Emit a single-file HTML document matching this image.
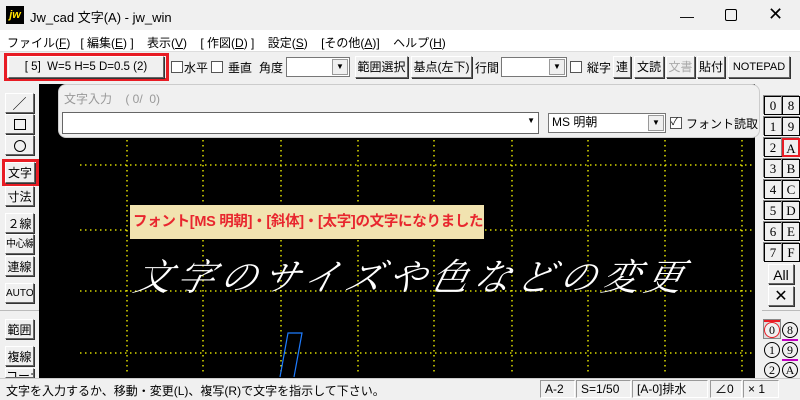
<!DOCTYPE html><html><head><meta charset="utf-8"><style>
*{margin:0;padding:0;box-sizing:border-box}
body{width:800px;height:400px;overflow:hidden;background:#f0f0f0;font-family:"Liberation Sans","Noto Sans CJK JP",sans-serif;font-size:12px;color:#000;position:relative}
.a{position:absolute}
.btn{position:absolute;background:#f0f0f0;border:1px solid;border-color:#fff #666 #666 #fff;box-shadow:1px 1px 0 #333;text-align:center;font-size:12px;line-height:20px;white-space:nowrap;overflow:hidden}
.cb{position:absolute;width:12px;height:12px;border:1px solid #555;background:#fff}
.sel{position:absolute;background:#fff;border:1px solid #777;height:20px}
.dd{position:absolute;right:1px;top:1px;width:16px;height:16px;background:#f0f0f0;border:1px solid #999;font-size:8px;line-height:14px;text-align:center}
.n{position:absolute;width:18px;height:19px;background:#f0f0f0;border:1px solid #000;font-family:"Liberation Serif",serif;font-size:13px;line-height:17px;text-align:center;box-shadow:-1px -1px 0 #888}
.st{position:absolute;top:380px;height:18px;border:1px solid;border-color:#999 #fff #fff #999;font-size:12px;line-height:16px;padding-left:4px}
.c{position:absolute;width:16px;height:16px;border:1px solid #000;border-radius:50%;font-family:"Liberation Serif",serif;font-size:12px;line-height:14px;text-align:center;background:#f0f0f0}
</style></head><body>
<div class="a" style="left:6px;top:6px;width:18px;height:18px;background:#000;color:#ffe000;font-weight:bold;font-style:italic;font-size:11px;line-height:18px;text-align:center">jw</div>
<div class="a" style="left:30px;top:7px;font-size:13px">Jw_cad 文字(A) - jw_win</div>
<div class="a" style="left:680px;top:8px;font-size:14px">—</div>
<div class="a" style="left:725px;top:9px;width:12px;height:12px;border:1.5px solid #000;border-radius:2px"></div>
<div class="a" style="left:768px;top:4px;font-size:18px">✕</div>
<div class="a" style="left:0;top:30px;width:800px;height:21px;background:#fff"></div>
<div class="a" style="left:7px;top:34px;font-size:12px;white-space:pre">ファイル(<u>F</u>)   [ 編集(<u>E</u>) ]    表示(<u>V</u>)    [ 作図(<u>D</u>) ]    設定(<u>S</u>)    [その他(<u>A</u>)]    ヘルプ(<u>H</u>)</div>
<div class="a" style="left:0;top:51px;width:800px;height:1px;background:#ddd"></div>
<div class="a" style="left:4px;top:53px;width:165px;height:28px;border:3px solid #e81c24"></div>
<div class="btn" style="left:8px;top:56px;width:156px;height:22px;font-size:11.5px">[ 5]&nbsp; W=5 H=5 D=0.5 (2)</div>
<div class="cb" style="left:171px;top:61px"></div><div class="a" style="left:184px;top:59px">水平</div>
<div class="cb" style="left:211px;top:61px"></div><div class="a" style="left:228px;top:59px">垂直</div>
<div class="a" style="left:259px;top:59px">角度</div>
<div class="sel" style="left:286px;top:57px;width:64px"><div class="dd">▼</div></div>
<div class="btn" style="left:355px;top:56px;width:53px">範囲選択</div>
<div class="btn" style="left:411px;top:56px;width:61px">基点(左下)</div>
<div class="a" style="left:475px;top:59px">行間</div>
<div class="sel" style="left:501px;top:57px;width:66px"><div class="dd">▼</div></div>
<div class="cb" style="left:570px;top:61px"></div><div class="a" style="left:587px;top:59px">縦字</div>
<div class="btn" style="left:613px;top:56px;width:18px">連</div>
<div class="btn" style="left:634px;top:56px;width:30px">文読</div>
<div class="btn" style="left:666px;top:56px;width:29px;color:#aaa">文書</div>
<div class="btn" style="left:697px;top:56px;width:28px">貼付</div>
<div class="btn" style="left:728px;top:56px;width:62px;font-size:11px">NOTEPAD</div>
<div class="a" style="left:39px;top:84px;width:716px;height:294px;background:#000"></div>
<svg class="a" style="left:0;top:0" width="800" height="400">
<g stroke="#ffff00" stroke-width="1.3" stroke-dasharray="1.5,3.5">
<line x1="80" y1="165" x2="755" y2="165"/><line x1="80" y1="230" x2="755" y2="230"/><line x1="80" y1="291" x2="755" y2="291"/><line x1="80" y1="353" x2="755" y2="353"/>
<line x1="127" y1="140" x2="127" y2="375"/><line x1="203" y1="140" x2="203" y2="375"/><line x1="281" y1="140" x2="281" y2="375"/><line x1="358" y1="140" x2="358" y2="375"/><line x1="434" y1="140" x2="434" y2="375"/><line x1="512" y1="140" x2="512" y2="375"/><line x1="588" y1="140" x2="588" y2="375"/><line x1="665" y1="140" x2="665" y2="375"/><line x1="742" y1="140" x2="742" y2="375"/>
</g>
<polyline points="280,377 288,333 302,333 294,377" fill="none" stroke="#1e7cff" stroke-width="1.2"/>
</svg>
<div class="a" style="left:130px;top:205px;width:354px;height:34px;background:#f1e3b0"></div>
<div class="a" style="left:133px;top:210px;color:#e8262e;font-weight:bold;font-size:14.5px;letter-spacing:-0.3px;white-space:nowrap">フォント[MS 明朝]・[斜体]・[太字]の文字になりました</div>
<div class="a" style="left:136px;top:247px;color:#fff;font-family:'Liberation Serif','Noto Serif CJK SC',serif;font-style:italic;font-size:37px;letter-spacing:5.8px;white-space:nowrap;transform:skewX(-14deg)">文字のサイズや色などの変更</div>
<div class="a" style="left:58px;top:84px;width:702px;height:54px;background:#f0f0f0;border-radius:8px;border:1px solid #ccc"></div>
<div class="a" style="left:64px;top:90px;color:#999;font-size:12px;white-space:pre">文字入力    ( 0/  0)</div>
<div class="sel" style="left:62px;top:112px;width:477px;height:22px;border-color:#666"><div class="a" style="right:3px;top:3px;font-size:8px">▼</div></div>
<div class="sel" style="left:548px;top:113px;width:118px;padding-left:3px;line-height:16px">MS 明朝<div class="dd">▼</div></div>
<div class="cb" style="left:670px;top:117px;font-size:10px;line-height:10px">✓</div>
<div class="a" style="left:686px;top:115px;font-size:12px">フォント読取</div>
<div class="btn" style="left:5px;top:93px;width:29px;height:20px;font-size:14px">／</div>
<div class="btn" style="left:5px;top:114px;width:29px;height:20px"><div class="a" style="left:8px;top:4px;width:12px;height:11px;border:1px solid #000"></div></div>
<div class="btn" style="left:5px;top:135px;width:29px;height:20px"><div class="a" style="left:8px;top:4px;width:12px;height:12px;border:1px solid #000;border-radius:50%"></div></div>
<div class="a" style="left:2px;top:159px;width:37px;height:27px;border:3px solid #e81c24"></div>
<div class="btn" style="left:5px;top:162px;width:30px;height:21px">文字</div>
<div class="btn" style="left:5px;top:186px;width:29px;height:20px">寸法</div>
<div class="btn" style="left:5px;top:213px;width:29px;height:20px">２線</div>
<div class="btn" style="left:5px;top:234px;width:29px;height:20px;font-size:10px;letter-spacing:-0.5px">中心線</div>
<div class="btn" style="left:5px;top:256px;width:29px;height:20px">連線</div>
<div class="btn" style="left:5px;top:283px;width:29px;height:20px;font-size:10px">AUTO</div>
<div class="a" style="left:0;top:310px;width:39px;height:1px;background:#bbb"></div>
<div class="btn" style="left:5px;top:319px;width:29px;height:20px">範囲</div>
<div class="btn" style="left:5px;top:346px;width:29px;height:20px">複線</div>
<div class="btn" style="left:5px;top:368px;width:29px;height:10px;line-height:14px">コーナー</div>
<div class="a" style="left:764px;top:95px;width:12px;height:2px;background:#c000c0"></div>
<div class="n" style="left:764px;top:96px">0</div><div class="n" style="left:782px;top:96px">8</div>
<div class="n" style="left:764px;top:117px">1</div><div class="n" style="left:782px;top:117px">9</div>
<div class="n" style="left:764px;top:138px">2</div><div class="n" style="left:782px;top:138px;border:2px solid #e81c24">A</div>
<div class="n" style="left:764px;top:159px">3</div><div class="n" style="left:782px;top:159px">B</div>
<div class="n" style="left:764px;top:180px">4</div><div class="n" style="left:782px;top:180px">C</div>
<div class="n" style="left:764px;top:201px">5</div><div class="n" style="left:782px;top:201px">D</div>
<div class="n" style="left:764px;top:222px">6</div><div class="n" style="left:782px;top:222px">E</div>
<div class="n" style="left:764px;top:243px">7</div><div class="n" style="left:782px;top:243px">F</div>
<div class="btn" style="left:768px;top:264px;width:26px;height:20px;font-size:14px">All</div>
<div class="btn" style="left:768px;top:286px;width:26px;height:20px;font-size:16px">✕</div>
<div class="a" style="left:762px;top:310px;width:38px;height:1px;background:#bbb"></div>
<div class="a" style="left:763px;top:319px;width:18px;height:20px;background:#ddd;border:1px solid #888"></div>
<div class="a" style="left:764px;top:320px;width:16px;height:2px;background:#e81c24"></div>
<div class="c" style="left:764px;top:322px;border-color:#e81c24">0</div>
<div class="c" style="left:782px;top:322px">8</div>
<div class="c" style="left:764px;top:342px">1</div>
<div class="a" style="left:782px;top:339px;width:16px;height:2px;background:#c000c0"></div>
<div class="c" style="left:782px;top:342px">9</div>
<div class="c" style="left:764px;top:362px">2</div>
<div class="a" style="left:782px;top:359px;width:16px;height:2px;background:#c000c0"></div>
<div class="c" style="left:782px;top:362px">A</div>
<div class="a" style="left:0;top:378px;width:800px;height:22px;background:#f0f0f0;border-top:1px solid #ccc"></div>
<div class="a" style="left:6px;top:382px;font-size:12px">文字を入力するか、移動・変更(L)、複写(R)で文字を指示して下さい。</div>
<div class="st" style="left:540px;width:35px">A-2</div>
<div class="st" style="left:576px;width:55px">S=1/50</div>
<div class="st" style="left:632px;width:76px">[A-0]排水</div>
<div class="st" style="left:710px;width:32px">∠0</div>
<div class="st" style="left:743px;width:36px">× 1</div>
</body></html>
